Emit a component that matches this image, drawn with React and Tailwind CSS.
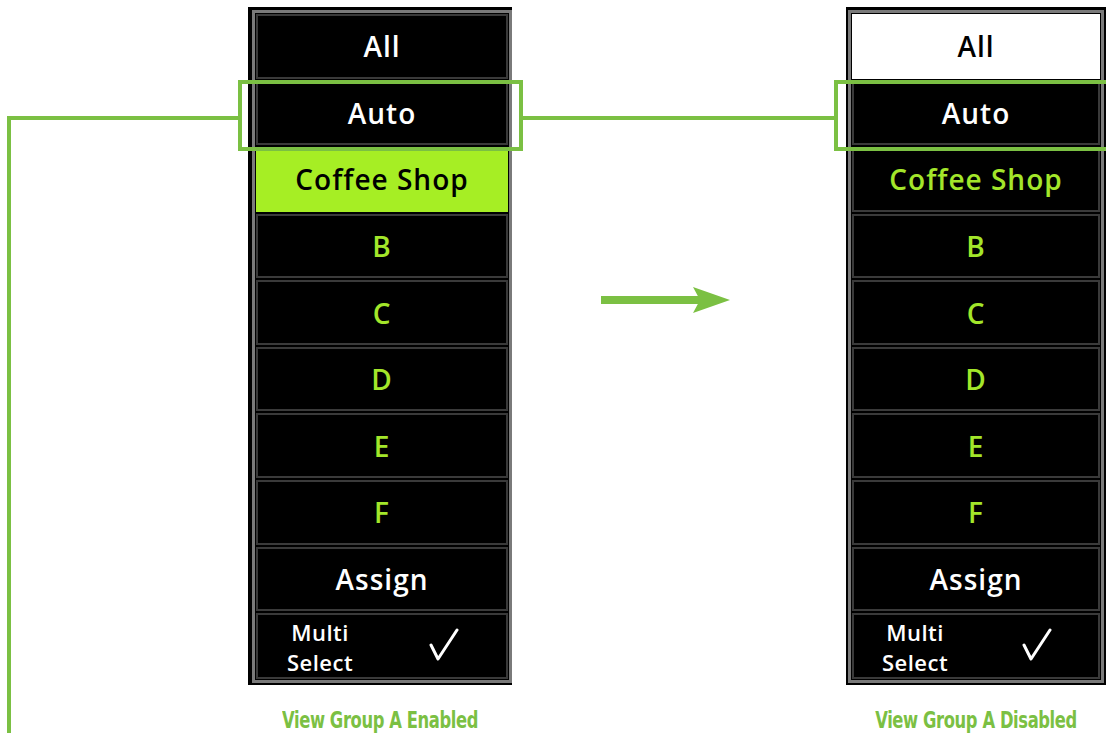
import React from 'react';

const rows = ['B', 'C', 'D', 'E', 'F'];

const Cell = ({ children, className = '' }) => (
  <div className={`flex-1 flex items-center justify-center border-2 ${className}`}>
    {children}
  </div>
);

const Check = () => (
  <svg width="30" height="34" viewBox="0 0 30 34" fill="none">
    <path d="M2 17 L9 31 L28 2" stroke="white" strokeWidth="3" strokeLinecap="round" strokeLinejoin="round" />
  </svg>
);

const Panel = ({ allOn, coffeeOn, wide }) => (
  <div className={`flex flex-col bg-black pt-[3px] pb-[2px] h-[678px] ${wide ? 'w-[264px] pl-[4px]' : 'w-[260px] pl-[2px] pr-[2px]'}`}>
    <div className="flex-1 flex flex-col gap-[2px] border-[3px] border-[#7a7a7a] p-[1px] text-[28px] font-semibold tracking-[1px] leading-none">
      <Cell className={allOn ? 'bg-white border-white text-black' : 'bg-black border-[#3a3a3a] text-white'}>All</Cell>
      <Cell className="bg-black border-[#3a3a3a] text-white">Auto</Cell>
      <Cell className={coffeeOn ? 'bg-[#a6ee24] border-[#a6ee24] text-black' : 'bg-black border-[#3a3a3a] text-[#a3e62a]'}>
        Coffee Shop
      </Cell>
      {rows.map((r) => (
        <Cell key={r} className="bg-black border-[#3a3a3a] text-[#a3e62a]">{r}</Cell>
      ))}
      <Cell className="bg-black border-[#3a3a3a] text-white">Assign</Cell>
      <div className="flex-1 grid grid-cols-2 items-center border-2 border-[#3a3a3a] text-white">
        <div className="text-center text-[22px] leading-[30px] font-semibold tracking-[0.5px] pt-[2px]">
          Multi
          <br />
          Select
        </div>
        <div className="flex justify-center pb-[2px]">
          <Check />
        </div>
      </div>
    </div>
  </div>
);

const Caption = ({ children }) => (
  <div
    className="mt-[24px] text-center text-[23px] leading-none font-bold text-[#7bc043] tracking-[-0.5px] scale-x-[0.79]"
    style={{ fontFamily: '"DejaVu Sans Condensed", "DejaVu Sans", sans-serif' }}
  >
    {children}
  </div>
);

export default function App() {
  return (
    <div
      className="relative w-[1106px] h-[733px] bg-white overflow-hidden"
      style={{ fontFamily: '"Open Sans", "Noto Sans", sans-serif' }}
    >
      <div className="flex pt-[7px]">
        <div className="ml-[248px] w-[264px] shrink-0">
          <Panel allOn={false} coffeeOn wide />
          <Caption>View Group A Enabled</Caption>
        </div>
        <div className="ml-[334px] w-[260px] shrink-0">
          <Panel allOn coffeeOn={false} />
          <Caption>View Group A Disabled</Caption>
        </div>
      </div>

      {/* callout: left bracket line */}
      <div className="absolute left-[7px] top-[116px] w-[4px] h-[617px] bg-[#7bc043]" />
      <div className="absolute left-[7px] top-[116px] w-[231px] h-[4px] bg-[#7bc043]" />
      <div className="absolute left-[238px] top-[80px] w-[285px] h-[71px] border-4 border-[#7bc043]" />
      <div className="absolute left-[523px] top-[116px] w-[311px] h-[4px] bg-[#7bc043]" />
      <div className="absolute left-[834px] top-[80px] w-[290px] h-[71px] border-4 border-[#7bc043]" />

      {/* arrow */}
      <svg className="absolute left-[600px] top-[285px]" width="132" height="30" viewBox="0 0 132 30">
        <rect x="1" y="11" width="100" height="8" fill="#7bc043" />
        <path d="M93 2 L130 15 L93 28 L100 15 Z" fill="#7bc043" />
      </svg>
    </div>
  );
}
